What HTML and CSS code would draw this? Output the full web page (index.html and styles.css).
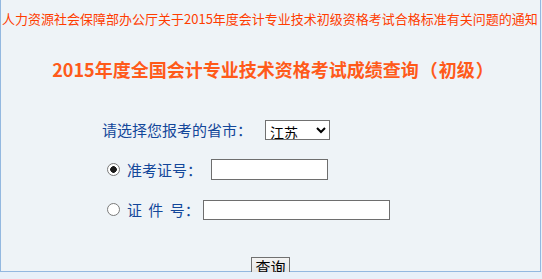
FILE: index.html
```html
<!DOCTYPE html>
<html lang="zh-CN">
    <head>
        <title>2015年度全国会计专业技术资格考试成绩查询（初级）</title>
        <meta charset="utf-8">
        <link rel="stylesheet" href="styles.css">
    </head>
    <body>
        <div class="panel">
            <p class="notice">人力资源社会保障部办公厅关于2015年度会计专业技术初级资格考试合格标准有关问题的通知</p>
            <h1 class="title">2015年度全国会计专业技术资格考试成绩查询<span class="punct">（</span>初级<span class="punct">）</span></h1>
            <form class="query">
                <div class="row">
                    <label class="label" for="province">请选择您报考的省市<span class="punct">：</span></label>
                    <select class="province" id="province">
                        <option>江苏</option>
                    </select>
                </div>
                <div class="row">
                    <input class="radio" type="radio" name="kind" id="kind-zkz" checked>
                    <label class="label" for="kind-zkz">准考证号<span class="punct">：</span></label>
                    <input class="field field-short" type="text">
                </div>
                <div class="row">
                    <input class="radio" type="radio" name="kind" id="kind-id">
                    <label class="label label-spaced" for="kind-id">证 件 号<span class="punct">：</span></label>
                    <input class="field field-long" type="text">
                </div>
                <div class="actions">
                    <button class="submit" type="button">查询</button>
                </div>
            </form>
        </div>
    </body>
</html>
```

FILE: styles.css
```css
* {
    box-sizing: border-box;
}
body {
    margin: 0;
    background-color: #e8f0f9;
    font-family: "Noto Sans CJK SC", "Noto Sans", sans-serif;
}
.panel {
    width: 541px;
    height: 272px;
    border: 1px solid #93b8e0;
    border-top: 0;
    background-color: #eef3f7;
}
.notice {
    margin: 0;
    padding: 11px 0 0 1px;
    font-size: 13px;
    line-height: 16px;
    color: #ff3c00;
    white-space: nowrap;
}
.title {
    margin: 30px 0 0;
    padding-left: 6px;
    font-size: 18px;
    line-height: 24px;
    font-weight: bold;
    text-align: center;
    color: #ff5a1a;
}
.punct {
    font-family: "Noto Sans CJK TC", sans-serif;
}
.title .punct {
    margin: 0 1px;
}
.query {
    padding-left: 101px;
    margin: 38px 0 0;
}
.row {
    display: flex;
    align-items: center;
    height: 21px;
    margin-bottom: 19px;
}
.label {
    font-size: 15px;
    color: #13479a;
}
.label-spaced {
    word-spacing: 3px;
}
.province {
    width: 65px;
    height: 20px;
    margin-left: 13px;
    border: 1px solid #707070;
    background-color: #fff;
    font-family: inherit;
    font-size: 14px;
    color: #000;
    border-radius: 0;
}
.radio {
    appearance: none;
    width: 13px;
    height: 13px;
    margin: 0 7px 0 5px;
    border: 1px solid #7a7a7a;
    border-radius: 50%;
    background-color: #fff;
}
.radio:checked {
    background: radial-gradient(circle, #1b1b1b 0, #1b1b1b 3px, #fff 3.6px);
}
.field {
    height: 21px;
    border: 1px solid #6e6e6e;
    background-color: #fff;
    padding: 0 2px;
}
.field-short {
    width: 117px;
    margin-left: 9px;
}
.field-long {
    width: 187px;
    height: 20px;
    margin-left: 3px;
}
.actions {
    display: flex;
    justify-content: center;
    margin-left: -101px;
    padding-top: 18px;
}
.submit {
    display: block;
    height: 24px;
    padding: 0 3px 5px;
    border: 1px solid #707070;
    background: linear-gradient(#f3f3f3, #dddddd);
    font-family: inherit;
    font-size: 15px;
    line-height: 17px;
    color: #000;
}
```
